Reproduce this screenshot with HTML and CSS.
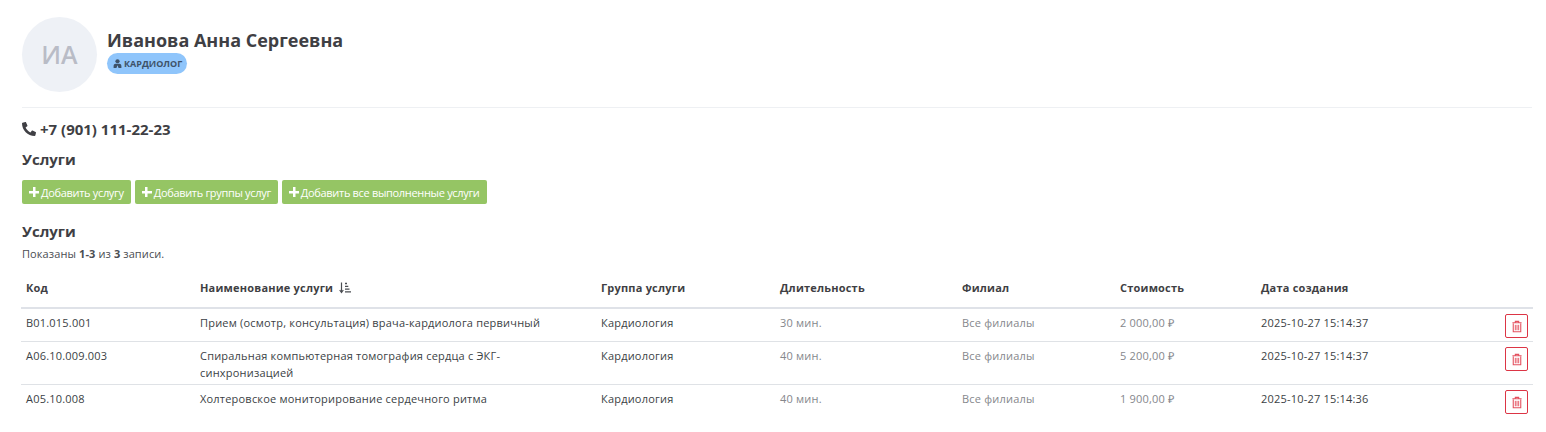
FILE: index.html
```html
<!DOCTYPE html>
<html lang="ru">
<head>
<meta charset="utf-8">
<title>Иванова Анна Сергеевна</title>
<link rel="stylesheet" href="styles.css">
</head>
<body>
<main class="page">
  <header class="profile">
    <div class="avatar">ИА</div>
    <div class="profile-info">
      <h1 class="name">Иванова Анна Сергеевна</h1>
      <span class="badge">
        <svg class="badge-icon" viewBox="0 0 12 12"><circle cx="6" cy="3" r="2.800" fill="currentColor"/><path d="M.8 12V9.200C.8 7.600 2.100 6.400 3.600 6.400H8.400C9.900 6.400 11.200 7.600 11.200 9.200V12H7.400L6 8.200 4.600 12Z" fill="currentColor"/></svg>
        КАРДИОЛОГ
      </span>
    </div>
  </header>
  <div class="phone">
    <svg class="phone-icon" viewBox="0 0 512 512"><path fill="currentColor" d="M493.4 24.6l-104-24c-11.300-2.600-22.900 3.300-27.500 13.900l-48 112c-4.200 9.800-1.400 21.300 6.900 28l60.600 49.600c-36 76.700-98.900 140.500-177.200 177.200l-49.600-60.600c-6.800-8.300-18.200-11.100-28-6.900l-112 48C3.900 366.500-2 378.100.6 389.400l24 104C27.100 504.200 36.700 512 48 512c256.100 0 464-207.500 464-464 0-11.200-7.700-20.900-18.600-23.400z" transform="matrix(-1 0 0 1 512 0)"/></svg>
    <span>+7 (901) 111-22-23</span>
  </div>
  <h2 class="section-title">Услуги</h2>
  <div class="actions">
    <a class="btn"><span class="plus"></span>Добавить услугу</a>
    <a class="btn"><span class="plus"></span>Добавить группы услуг</a>
    <a class="btn"><span class="plus"></span>Добавить все выполненные услуги</a>
  </div>
  <h2 class="section-title list-title">Услуги</h2>
  <p class="summary">Показаны <b>1-3</b> из <b>3</b> записи.</p>
  <table class="grid">
    <thead>
      <tr>
        <th class="c-code">Код</th>
        <th class="c-name">Наименование услуги
          <svg class="sort-icon" viewBox="0 0 12 12"><path d="M2.500 0.500V10M0.700 8L2.500 10.500 4.300 8" fill="none" stroke="currentColor" stroke-width="1.200"/><path d="M6 1.500H8M6 4.300H9.300M6 7.100H10.500M6 9.900H12" stroke="currentColor" stroke-width="1.300"/></svg>
        </th>
        <th class="c-group">Группа услуги</th>
        <th class="c-dur">Длительность</th>
        <th class="c-branch">Филиал</th>
        <th class="c-cost">Стоимость</th>
        <th class="c-date">Дата создания</th>
        <th class="c-del"></th>
      </tr>
    </thead>
    <tbody>
      <tr>
        <td>B01.015.001</td>
        <td class="name-cell">Прием (осмотр, консультация) врача-кардиолога первичный</td>
        <td>Кардиология</td>
        <td class="muted">30 мин.</td>
        <td class="muted">Все филиалы</td>
        <td class="muted">2 000,00 ₽</td>
        <td>2025-10-27 15:14:37</td>
        <td class="del-cell"><a class="del"><svg viewBox="0 0 12 14"><path d="M4 2V.8H8V2M.5 2.400H11.500M1.500 3.500V13.200H10.500V3.500" fill="none" stroke="currentColor" stroke-width="1.300"/><path d="M4 5V11.500M6 5V11.500M8 5V11.500" stroke="currentColor" stroke-width="1.100"/></svg></a></td>
      </tr>
      <tr>
        <td>A06.10.009.003</td>
        <td class="name-cell">Спиральная компьютерная томография сердца с ЭКГ-синхронизацией</td>
        <td>Кардиология</td>
        <td class="muted">40 мин.</td>
        <td class="muted">Все филиалы</td>
        <td class="muted">5 200,00 ₽</td>
        <td>2025-10-27 15:14:37</td>
        <td class="del-cell"><a class="del"><svg viewBox="0 0 12 14"><path d="M4 2V.8H8V2M.5 2.400H11.500M1.500 3.500V13.200H10.500V3.500" fill="none" stroke="currentColor" stroke-width="1.300"/><path d="M4 5V11.500M6 5V11.500M8 5V11.500" stroke="currentColor" stroke-width="1.100"/></svg></a></td>
      </tr>
      <tr>
        <td>A05.10.008</td>
        <td class="name-cell">Холтеровское мониторирование сердечного ритма</td>
        <td>Кардиология</td>
        <td class="muted">40 мин.</td>
        <td class="muted">Все филиалы</td>
        <td class="muted">1 900,00 ₽</td>
        <td>2025-10-27 15:14:36</td>
        <td class="del-cell"><a class="del"><svg viewBox="0 0 12 14"><path d="M4 2V.8H8V2M.5 2.400H11.500M1.500 3.500V13.200H10.500V3.500" fill="none" stroke="currentColor" stroke-width="1.300"/><path d="M4 5V11.500M6 5V11.500M8 5V11.500" stroke="currentColor" stroke-width="1.100"/></svg></a></td>
      </tr>
    </tbody>
  </table>
</main>
</body>
</html>
```
FILE: styles.css
```css
* { box-sizing: border-box; }
html, body { margin: 0; background: #fff; }
body { font-family: "Open Sans", sans-serif; font-size: 11px; line-height: 17px; color: #3b3f45; overflow: hidden; }
.page { padding: 17px 14px 0 22px; }
.profile { display: flex; gap: 10px; padding-bottom: 15px; border-bottom: 1px solid #eef0f3; }
.avatar { width: 75px; height: 75px; border-radius: 50%; background: #eef1f6; color: #b9bcc6; font-size: 25px; font-weight: 600; line-height: 75px; text-align: center; }
.profile-info { padding-top: 11px; }
.name { margin: 0; font-size: 18px; line-height: 24px; font-weight: 700; color: #3f3f44; }
.badge { display: inline-flex; align-items: center; gap: 2px; height: 21px; margin-top: 1px; padding: 0 5px 0 6px; border-radius: 11px; background: #8fc5fb; color: #3e5268; font-size: 9px; font-weight: 700; line-height: 21px; }
.badge-icon { width: 9px; height: 9px; }
.phone { display: flex; align-items: center; gap: 4px; margin-top: 11px; font-size: 15px; font-weight: 700; line-height: 20px; color: #3f3f44; }
.phone-icon { width: 14px; height: 14px; }
.section-title { margin: 10px 0 0; font-size: 15px; line-height: 20px; font-weight: 700; color: #3f3f44; }
.actions { display: flex; gap: 4px; margin-top: 11px; }
.btn { display: flex; align-items: center; gap: 2px; height: 24px; padding: 0 7px; border-radius: 2px; background: #95c564; color: #fff; font-size: 11px; letter-spacing: -0.32px; }
.plus { width: 10px; height: 10px; background: linear-gradient(#fff, #fff) center / 100% 2.500px no-repeat, linear-gradient(#fff, #fff) center / 2.500px 100% no-repeat; }
.list-title { margin-top: 17px; }
.summary { margin: 5px 0 0; font-size: 11px; line-height: 16px; letter-spacing: 0.1px; color: #4a4d52; }
.summary b { font-weight: 700; }
.grid { width: 1512px; margin: 7px 0 0 -1px; border-collapse: collapse; table-layout: fixed; letter-spacing: 0.2px; }
.grid th { height: 39px; padding: 0 5px 2px; border-bottom: 2px solid #dfe2e8; text-align: left; font-weight: 700; font-size: 11px; letter-spacing: 0.2px; color: #3f3f44; }
.grid td { padding: 5px 5px 3px; vertical-align: top; border-bottom: 1px solid #dfe2e6; color: #3b3f45; }
.grid td.name-cell { padding-right: 12px; }
.grid tr:last-child td { border-bottom: 0; }
.grid .muted { color: #85878c; }
.c-code { width: 174px; }
.c-name { width: 401px; }
.c-group { width: 179px; }
.c-dur { width: 182px; }
.c-branch { width: 158px; }
.c-cost { width: 141px; }
.c-date { width: 230px; }
.sort-icon { width: 12px; height: 12px; margin-left: 3px; vertical-align: -2px; color: #4a4d52; }
.grid td.del-cell { padding: 5px 4px 3px 0; }
.del { display: flex; align-items: center; justify-content: center; width: 23px; height: 24px; margin-left: auto; margin-right: 1px; border: 1px solid #dc3545; border-radius: 2px; color: #e4515f; }
.del svg { width: 10px; height: 13px; }
```
